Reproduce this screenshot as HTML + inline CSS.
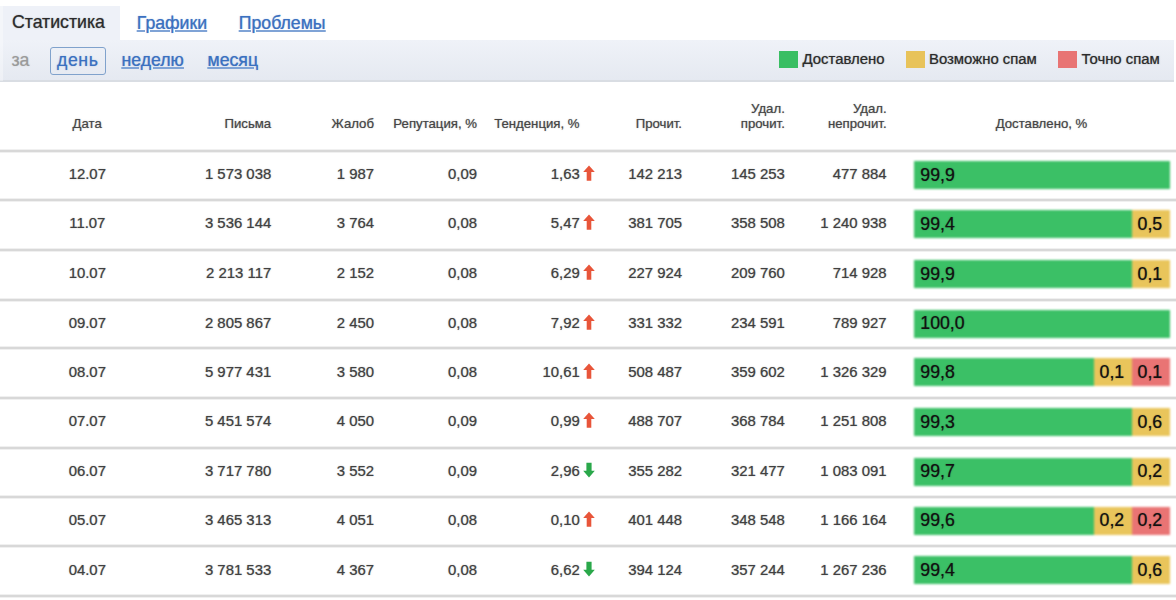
<!DOCTYPE html>
<html><head><meta charset="utf-8"><style>
html,body{margin:0;padding:0;background:#fff;width:1176px;height:600px;overflow:hidden;position:relative;font-family:"Liberation Sans",sans-serif;}
.t{position:absolute;white-space:pre;-webkit-text-stroke:0.1px currentColor;}
#w{position:absolute;left:0;top:0;width:1176px;height:600px;}
.bl{filter:blur(0.8px);}
.ln{position:absolute;left:0;width:1176px;height:2px;background:#d8d8d8;box-shadow:0 1px 0 #f0f0f0,0 -1px 0 #f0f0f0;}
.bar{position:absolute;}
.seg{position:absolute;top:0;height:100%;}
a{color:inherit;text-decoration:none;}
</style></head><body><div id="w">

<div style="position:absolute;left:0;top:6px;width:120px;height:34px;background:#eef1f8;"></div>
<div style="position:absolute;left:0;top:39.5px;width:1174px;height:40px;background:linear-gradient(#eff2f8,#e5e9f1);border-bottom:2px solid #d9dde3;"></div>
<div style="position:absolute;left:0;top:6px;width:3px;height:75px;background:rgba(255,255,255,.35);"></div>
<div class="t" style="left:12.00px;top:12.05px;font-size:17.7px;line-height:21.24px;color:#2b2b2b;text-shadow:0 0 1.2px rgba(43,43,43,0.5);">Статистика</div>
<div class="t" style="left:136.80px;top:12.65px;font-size:17.7px;line-height:21.24px;color:#3a70c0;text-shadow:0 0 1.2px rgba(58,112,192,0.5);text-decoration:underline;text-decoration-color:#7fa3d6;text-decoration-thickness:1.5px;text-underline-offset:0.5px;">Графики</div>
<div class="t" style="left:238.80px;top:12.65px;font-size:17.7px;line-height:21.24px;color:#3a70c0;text-shadow:0 0 1.2px rgba(58,112,192,0.5);text-decoration:underline;text-decoration-color:#7fa3d6;text-decoration-thickness:1.5px;text-underline-offset:0.5px;">Проблемы</div>
<div class="t" style="left:11.50px;top:50.35px;font-size:17.7px;line-height:21.24px;color:#9a9a9a;text-shadow:0 0 1.2px rgba(154,154,154,0.5);">за</div>
<div style="position:absolute;left:50px;top:46.5px;width:53.5px;height:26.5px;border:1.4px solid #80a2cc;border-radius:3px;"></div>
<div class="t" style="left:57.00px;top:50.35px;font-size:17.7px;line-height:21.24px;color:#3a70c0;text-shadow:0 0 1.2px rgba(58,112,192,0.5);letter-spacing:0.6px;">день</div>
<div class="t" style="left:121.50px;top:50.35px;font-size:17.7px;line-height:21.24px;color:#3a70c0;text-shadow:0 0 1.2px rgba(58,112,192,0.5);text-decoration:underline;text-decoration-color:#7fa3d6;text-decoration-thickness:1.5px;text-underline-offset:0.5px;">неделю</div>
<div class="t" style="left:207.50px;top:50.35px;font-size:17.7px;line-height:21.24px;color:#3a70c0;text-shadow:0 0 1.2px rgba(58,112,192,0.5);text-decoration:underline;text-decoration-color:#7fa3d6;text-decoration-thickness:1.5px;text-underline-offset:0.5px;">месяц</div>
<div style="position:absolute;left:779px;top:51px;width:19px;height:17px;background:#39be63;"></div>
<div class="t" style="left:802.50px;top:50.90px;font-size:14.9px;line-height:17.88px;color:#2b2b2b;text-shadow:0 0 1.2px rgba(43,43,43,0.5);">Доставлено</div>
<div style="position:absolute;left:905.5px;top:51px;width:19px;height:17px;background:#e8c35a;"></div>
<div class="t" style="left:929.00px;top:50.90px;font-size:14.9px;line-height:17.88px;color:#2b2b2b;text-shadow:0 0 1.2px rgba(43,43,43,0.5);">Возможно спам</div>
<div style="position:absolute;left:1058px;top:51px;width:19px;height:17px;background:#e87474;"></div>
<div class="t" style="left:1081.50px;top:50.90px;font-size:14.9px;line-height:17.88px;color:#2b2b2b;text-shadow:0 0 1.2px rgba(43,43,43,0.5);">Точно спам</div>
<div class="t" style="left:-112.80px;width:400px;text-align:center;top:115.71px;font-size:13.2px;line-height:15.84px;color:#454545;text-shadow:0 0 1.2px rgba(69,69,69,0.5);">Дата</div>
<div class="t" style="right:904.80px;top:115.71px;font-size:13.2px;line-height:15.84px;color:#454545;text-shadow:0 0 1.2px rgba(69,69,69,0.5);">Письма</div>
<div class="t" style="right:802.00px;top:115.71px;font-size:13.2px;line-height:15.84px;color:#454545;text-shadow:0 0 1.2px rgba(69,69,69,0.5);">Жалоб</div>
<div class="t" style="right:699.00px;top:115.71px;font-size:13.2px;line-height:15.84px;color:#454545;text-shadow:0 0 1.2px rgba(69,69,69,0.5);">Репутация, %</div>
<div class="t" style="right:596.50px;top:115.71px;font-size:13.2px;line-height:15.84px;color:#454545;text-shadow:0 0 1.2px rgba(69,69,69,0.5);">Тенденция, %</div>
<div class="t" style="right:494.00px;top:115.71px;font-size:13.2px;line-height:15.84px;color:#454545;text-shadow:0 0 1.2px rgba(69,69,69,0.5);">Прочит.</div>
<div class="t" style="right:391.20px;top:101.11px;font-size:13.2px;line-height:15.84px;color:#454545;text-shadow:0 0 1.2px rgba(69,69,69,0.5);">Удал.</div>
<div class="t" style="right:391.20px;top:115.71px;font-size:13.2px;line-height:15.84px;color:#454545;text-shadow:0 0 1.2px rgba(69,69,69,0.5);">прочит.</div>
<div class="t" style="right:289.40px;top:101.11px;font-size:13.2px;line-height:15.84px;color:#454545;text-shadow:0 0 1.2px rgba(69,69,69,0.5);">Удал.</div>
<div class="t" style="right:289.40px;top:115.71px;font-size:13.2px;line-height:15.84px;color:#454545;text-shadow:0 0 1.2px rgba(69,69,69,0.5);">непрочит.</div>
<div class="t" style="left:841.50px;width:400px;text-align:center;top:115.71px;font-size:13.2px;line-height:15.84px;color:#454545;text-shadow:0 0 1.2px rgba(69,69,69,0.5);">Доставлено, %</div>
<div class="ln" style="top:150px"></div>
<div class="ln" style="top:199px"></div>
<div class="ln" style="top:249px"></div>
<div class="ln" style="top:299px"></div>
<div class="ln" style="top:347px"></div>
<div class="ln" style="top:397px"></div>
<div class="ln" style="top:447px"></div>
<div class="ln" style="top:496px"></div>
<div class="ln" style="top:545px"></div>
<div class="ln" style="top:595px"></div>
<div class="t" style="left:-112.70px;width:400px;text-align:center;top:166.27px;font-size:14.9px;line-height:17.88px;color:#404040;text-shadow:0 0 1.2px rgba(64,64,64,0.5);">12.07</div>
<div class="t" style="right:904.80px;top:166.27px;font-size:14.9px;line-height:17.88px;color:#404040;text-shadow:0 0 1.2px rgba(64,64,64,0.5);">1 573 038</div>
<div class="t" style="right:802.00px;top:166.27px;font-size:14.9px;line-height:17.88px;color:#404040;text-shadow:0 0 1.2px rgba(64,64,64,0.5);">1 987</div>
<div class="t" style="right:699.00px;top:166.27px;font-size:14.9px;line-height:17.88px;color:#404040;text-shadow:0 0 1.2px rgba(64,64,64,0.5);">0,09</div>
<div class="t" style="right:596.30px;top:166.27px;font-size:14.9px;line-height:17.88px;color:#404040;text-shadow:0 0 1.2px rgba(64,64,64,0.5);">1,63</div>
<svg style="position:absolute;left:583px;top:165.37px" width="12" height="16" viewBox="0 0 12 16"><path d="M6 0.5 L11.8 7 L8.3 7 L8.3 15.8 L3.7 15.8 L3.7 7 L0.2 7 Z" fill="#e8553a"/></svg>
<div class="t" style="right:494.00px;top:166.27px;font-size:14.9px;line-height:17.88px;color:#404040;text-shadow:0 0 1.2px rgba(64,64,64,0.5);">142 213</div>
<div class="t" style="right:391.20px;top:166.27px;font-size:14.9px;line-height:17.88px;color:#404040;text-shadow:0 0 1.2px rgba(64,64,64,0.5);">145 253</div>
<div class="t" style="right:289.40px;top:166.27px;font-size:14.9px;line-height:17.88px;color:#404040;text-shadow:0 0 1.2px rgba(64,64,64,0.5);">477 884</div>
<div class="bl" style="position:absolute;left:914px;top:161.07px;width:256px;height:28px;background:#3bc066"></div>
<div class="t" style="left:920.30px;top:164.82px;font-size:17.7px;line-height:21.24px;color:#111;text-shadow:0 0 1.2px rgba(17,17,17,0.5);text-shadow:0 0 1.2px rgba(17,17,17,.55);">99,9</div>
<div class="t" style="left:-112.70px;width:400px;text-align:center;top:215.30px;font-size:14.9px;line-height:17.88px;color:#404040;text-shadow:0 0 1.2px rgba(64,64,64,0.5);">11.07</div>
<div class="t" style="right:904.80px;top:215.30px;font-size:14.9px;line-height:17.88px;color:#404040;text-shadow:0 0 1.2px rgba(64,64,64,0.5);">3 536 144</div>
<div class="t" style="right:802.00px;top:215.30px;font-size:14.9px;line-height:17.88px;color:#404040;text-shadow:0 0 1.2px rgba(64,64,64,0.5);">3 764</div>
<div class="t" style="right:699.00px;top:215.30px;font-size:14.9px;line-height:17.88px;color:#404040;text-shadow:0 0 1.2px rgba(64,64,64,0.5);">0,08</div>
<div class="t" style="right:596.30px;top:215.30px;font-size:14.9px;line-height:17.88px;color:#404040;text-shadow:0 0 1.2px rgba(64,64,64,0.5);">5,47</div>
<svg style="position:absolute;left:583px;top:214.40px" width="12" height="16" viewBox="0 0 12 16"><path d="M6 0.5 L11.8 7 L8.3 7 L8.3 15.8 L3.7 15.8 L3.7 7 L0.2 7 Z" fill="#e8553a"/></svg>
<div class="t" style="right:494.00px;top:215.30px;font-size:14.9px;line-height:17.88px;color:#404040;text-shadow:0 0 1.2px rgba(64,64,64,0.5);">381 705</div>
<div class="t" style="right:391.20px;top:215.30px;font-size:14.9px;line-height:17.88px;color:#404040;text-shadow:0 0 1.2px rgba(64,64,64,0.5);">358 508</div>
<div class="t" style="right:289.40px;top:215.30px;font-size:14.9px;line-height:17.88px;color:#404040;text-shadow:0 0 1.2px rgba(64,64,64,0.5);">1 240 938</div>
<div class="bl" style="position:absolute;left:914px;top:210.10px;width:256px;height:28px;background:#3bc066"><div style="position:absolute;left:218.00px;top:0;width:38.00px;height:100%;background:#e9c55b"></div></div>
<div class="t" style="left:920.30px;top:213.85px;font-size:17.7px;line-height:21.24px;color:#111;text-shadow:0 0 1.2px rgba(17,17,17,0.5);text-shadow:0 0 1.2px rgba(17,17,17,.55);">99,4</div>
<div class="t" style="left:1137.60px;top:213.85px;font-size:17.7px;line-height:21.24px;color:#111;text-shadow:0 0 1.2px rgba(17,17,17,0.5);text-shadow:0 0 1.2px rgba(17,17,17,.55);">0,5</div>
<div class="t" style="left:-112.70px;width:400px;text-align:center;top:265.10px;font-size:14.9px;line-height:17.88px;color:#404040;text-shadow:0 0 1.2px rgba(64,64,64,0.5);">10.07</div>
<div class="t" style="right:904.80px;top:265.10px;font-size:14.9px;line-height:17.88px;color:#404040;text-shadow:0 0 1.2px rgba(64,64,64,0.5);">2 213 117</div>
<div class="t" style="right:802.00px;top:265.10px;font-size:14.9px;line-height:17.88px;color:#404040;text-shadow:0 0 1.2px rgba(64,64,64,0.5);">2 152</div>
<div class="t" style="right:699.00px;top:265.10px;font-size:14.9px;line-height:17.88px;color:#404040;text-shadow:0 0 1.2px rgba(64,64,64,0.5);">0,08</div>
<div class="t" style="right:596.30px;top:265.10px;font-size:14.9px;line-height:17.88px;color:#404040;text-shadow:0 0 1.2px rgba(64,64,64,0.5);">6,29</div>
<svg style="position:absolute;left:583px;top:264.20px" width="12" height="16" viewBox="0 0 12 16"><path d="M6 0.5 L11.8 7 L8.3 7 L8.3 15.8 L3.7 15.8 L3.7 7 L0.2 7 Z" fill="#e8553a"/></svg>
<div class="t" style="right:494.00px;top:265.10px;font-size:14.9px;line-height:17.88px;color:#404040;text-shadow:0 0 1.2px rgba(64,64,64,0.5);">227 924</div>
<div class="t" style="right:391.20px;top:265.10px;font-size:14.9px;line-height:17.88px;color:#404040;text-shadow:0 0 1.2px rgba(64,64,64,0.5);">209 760</div>
<div class="t" style="right:289.40px;top:265.10px;font-size:14.9px;line-height:17.88px;color:#404040;text-shadow:0 0 1.2px rgba(64,64,64,0.5);">714 928</div>
<div class="bl" style="position:absolute;left:914px;top:259.90px;width:256px;height:28px;background:#3bc066"><div style="position:absolute;left:218.00px;top:0;width:38.00px;height:100%;background:#e9c55b"></div></div>
<div class="t" style="left:920.30px;top:263.65px;font-size:17.7px;line-height:21.24px;color:#111;text-shadow:0 0 1.2px rgba(17,17,17,0.5);text-shadow:0 0 1.2px rgba(17,17,17,.55);">99,9</div>
<div class="t" style="left:1137.60px;top:263.65px;font-size:17.7px;line-height:21.24px;color:#111;text-shadow:0 0 1.2px rgba(17,17,17,0.5);text-shadow:0 0 1.2px rgba(17,17,17,.55);">0,1</div>
<div class="t" style="left:-112.70px;width:400px;text-align:center;top:314.70px;font-size:14.9px;line-height:17.88px;color:#404040;text-shadow:0 0 1.2px rgba(64,64,64,0.5);">09.07</div>
<div class="t" style="right:904.80px;top:314.70px;font-size:14.9px;line-height:17.88px;color:#404040;text-shadow:0 0 1.2px rgba(64,64,64,0.5);">2 805 867</div>
<div class="t" style="right:802.00px;top:314.70px;font-size:14.9px;line-height:17.88px;color:#404040;text-shadow:0 0 1.2px rgba(64,64,64,0.5);">2 450</div>
<div class="t" style="right:699.00px;top:314.70px;font-size:14.9px;line-height:17.88px;color:#404040;text-shadow:0 0 1.2px rgba(64,64,64,0.5);">0,08</div>
<div class="t" style="right:596.30px;top:314.70px;font-size:14.9px;line-height:17.88px;color:#404040;text-shadow:0 0 1.2px rgba(64,64,64,0.5);">7,92</div>
<svg style="position:absolute;left:583px;top:313.80px" width="12" height="16" viewBox="0 0 12 16"><path d="M6 0.5 L11.8 7 L8.3 7 L8.3 15.8 L3.7 15.8 L3.7 7 L0.2 7 Z" fill="#e8553a"/></svg>
<div class="t" style="right:494.00px;top:314.70px;font-size:14.9px;line-height:17.88px;color:#404040;text-shadow:0 0 1.2px rgba(64,64,64,0.5);">331 332</div>
<div class="t" style="right:391.20px;top:314.70px;font-size:14.9px;line-height:17.88px;color:#404040;text-shadow:0 0 1.2px rgba(64,64,64,0.5);">234 591</div>
<div class="t" style="right:289.40px;top:314.70px;font-size:14.9px;line-height:17.88px;color:#404040;text-shadow:0 0 1.2px rgba(64,64,64,0.5);">789 927</div>
<div class="bl" style="position:absolute;left:914px;top:309.50px;width:256px;height:28px;background:#3bc066"></div>
<div class="t" style="left:920.30px;top:313.25px;font-size:17.7px;line-height:21.24px;color:#111;text-shadow:0 0 1.2px rgba(17,17,17,0.5);text-shadow:0 0 1.2px rgba(17,17,17,.55);">100,0</div>
<div class="t" style="left:-112.70px;width:400px;text-align:center;top:363.60px;font-size:14.9px;line-height:17.88px;color:#404040;text-shadow:0 0 1.2px rgba(64,64,64,0.5);">08.07</div>
<div class="t" style="right:904.80px;top:363.60px;font-size:14.9px;line-height:17.88px;color:#404040;text-shadow:0 0 1.2px rgba(64,64,64,0.5);">5 977 431</div>
<div class="t" style="right:802.00px;top:363.60px;font-size:14.9px;line-height:17.88px;color:#404040;text-shadow:0 0 1.2px rgba(64,64,64,0.5);">3 580</div>
<div class="t" style="right:699.00px;top:363.60px;font-size:14.9px;line-height:17.88px;color:#404040;text-shadow:0 0 1.2px rgba(64,64,64,0.5);">0,08</div>
<div class="t" style="right:596.30px;top:363.60px;font-size:14.9px;line-height:17.88px;color:#404040;text-shadow:0 0 1.2px rgba(64,64,64,0.5);">10,61</div>
<svg style="position:absolute;left:583px;top:362.70px" width="12" height="16" viewBox="0 0 12 16"><path d="M6 0.5 L11.8 7 L8.3 7 L8.3 15.8 L3.7 15.8 L3.7 7 L0.2 7 Z" fill="#e8553a"/></svg>
<div class="t" style="right:494.00px;top:363.60px;font-size:14.9px;line-height:17.88px;color:#404040;text-shadow:0 0 1.2px rgba(64,64,64,0.5);">508 487</div>
<div class="t" style="right:391.20px;top:363.60px;font-size:14.9px;line-height:17.88px;color:#404040;text-shadow:0 0 1.2px rgba(64,64,64,0.5);">359 602</div>
<div class="t" style="right:289.40px;top:363.60px;font-size:14.9px;line-height:17.88px;color:#404040;text-shadow:0 0 1.2px rgba(64,64,64,0.5);">1 326 329</div>
<div class="bl" style="position:absolute;left:914px;top:358.40px;width:256px;height:28px;background:#3bc066"><div style="position:absolute;left:180.00px;top:0;width:38.00px;height:100%;background:#e9c55b"></div><div style="position:absolute;left:218.00px;top:0;width:38.00px;height:100%;background:#e97474"></div></div>
<div class="t" style="left:920.30px;top:362.15px;font-size:17.7px;line-height:21.24px;color:#111;text-shadow:0 0 1.2px rgba(17,17,17,0.5);text-shadow:0 0 1.2px rgba(17,17,17,.55);">99,8</div>
<div class="t" style="left:1099.60px;top:362.15px;font-size:17.7px;line-height:21.24px;color:#111;text-shadow:0 0 1.2px rgba(17,17,17,0.5);text-shadow:0 0 1.2px rgba(17,17,17,.55);">0,1</div>
<div class="t" style="left:1137.60px;top:362.15px;font-size:17.7px;line-height:21.24px;color:#111;text-shadow:0 0 1.2px rgba(17,17,17,0.5);text-shadow:0 0 1.2px rgba(17,17,17,.55);">0,1</div>
<div class="t" style="left:-112.70px;width:400px;text-align:center;top:413.20px;font-size:14.9px;line-height:17.88px;color:#404040;text-shadow:0 0 1.2px rgba(64,64,64,0.5);">07.07</div>
<div class="t" style="right:904.80px;top:413.20px;font-size:14.9px;line-height:17.88px;color:#404040;text-shadow:0 0 1.2px rgba(64,64,64,0.5);">5 451 574</div>
<div class="t" style="right:802.00px;top:413.20px;font-size:14.9px;line-height:17.88px;color:#404040;text-shadow:0 0 1.2px rgba(64,64,64,0.5);">4 050</div>
<div class="t" style="right:699.00px;top:413.20px;font-size:14.9px;line-height:17.88px;color:#404040;text-shadow:0 0 1.2px rgba(64,64,64,0.5);">0,09</div>
<div class="t" style="right:596.30px;top:413.20px;font-size:14.9px;line-height:17.88px;color:#404040;text-shadow:0 0 1.2px rgba(64,64,64,0.5);">0,99</div>
<svg style="position:absolute;left:583px;top:412.30px" width="12" height="16" viewBox="0 0 12 16"><path d="M6 0.5 L11.8 7 L8.3 7 L8.3 15.8 L3.7 15.8 L3.7 7 L0.2 7 Z" fill="#e8553a"/></svg>
<div class="t" style="right:494.00px;top:413.20px;font-size:14.9px;line-height:17.88px;color:#404040;text-shadow:0 0 1.2px rgba(64,64,64,0.5);">488 707</div>
<div class="t" style="right:391.20px;top:413.20px;font-size:14.9px;line-height:17.88px;color:#404040;text-shadow:0 0 1.2px rgba(64,64,64,0.5);">368 784</div>
<div class="t" style="right:289.40px;top:413.20px;font-size:14.9px;line-height:17.88px;color:#404040;text-shadow:0 0 1.2px rgba(64,64,64,0.5);">1 251 808</div>
<div class="bl" style="position:absolute;left:914px;top:408.00px;width:256px;height:28px;background:#3bc066"><div style="position:absolute;left:218.00px;top:0;width:38.00px;height:100%;background:#e9c55b"></div></div>
<div class="t" style="left:920.30px;top:411.75px;font-size:17.7px;line-height:21.24px;color:#111;text-shadow:0 0 1.2px rgba(17,17,17,0.5);text-shadow:0 0 1.2px rgba(17,17,17,.55);">99,3</div>
<div class="t" style="left:1137.60px;top:411.75px;font-size:17.7px;line-height:21.24px;color:#111;text-shadow:0 0 1.2px rgba(17,17,17,0.5);text-shadow:0 0 1.2px rgba(17,17,17,.55);">0,6</div>
<div class="t" style="left:-112.70px;width:400px;text-align:center;top:462.90px;font-size:14.9px;line-height:17.88px;color:#404040;text-shadow:0 0 1.2px rgba(64,64,64,0.5);">06.07</div>
<div class="t" style="right:904.80px;top:462.90px;font-size:14.9px;line-height:17.88px;color:#404040;text-shadow:0 0 1.2px rgba(64,64,64,0.5);">3 717 780</div>
<div class="t" style="right:802.00px;top:462.90px;font-size:14.9px;line-height:17.88px;color:#404040;text-shadow:0 0 1.2px rgba(64,64,64,0.5);">3 552</div>
<div class="t" style="right:699.00px;top:462.90px;font-size:14.9px;line-height:17.88px;color:#404040;text-shadow:0 0 1.2px rgba(64,64,64,0.5);">0,09</div>
<div class="t" style="right:596.30px;top:462.90px;font-size:14.9px;line-height:17.88px;color:#404040;text-shadow:0 0 1.2px rgba(64,64,64,0.5);">2,96</div>
<svg style="position:absolute;left:583px;top:462.00px" width="12" height="16" viewBox="0 0 12 16"><path d="M3.4 0.8 L8.6 0.8 L8.6 8.8 L11.8 8.8 L6 15.6 L0.2 8.8 L3.4 8.8 Z" fill="#2aa84a"/></svg>
<div class="t" style="right:494.00px;top:462.90px;font-size:14.9px;line-height:17.88px;color:#404040;text-shadow:0 0 1.2px rgba(64,64,64,0.5);">355 282</div>
<div class="t" style="right:391.20px;top:462.90px;font-size:14.9px;line-height:17.88px;color:#404040;text-shadow:0 0 1.2px rgba(64,64,64,0.5);">321 477</div>
<div class="t" style="right:289.40px;top:462.90px;font-size:14.9px;line-height:17.88px;color:#404040;text-shadow:0 0 1.2px rgba(64,64,64,0.5);">1 083 091</div>
<div class="bl" style="position:absolute;left:914px;top:457.70px;width:256px;height:28px;background:#3bc066"><div style="position:absolute;left:218.00px;top:0;width:38.00px;height:100%;background:#e9c55b"></div></div>
<div class="t" style="left:920.30px;top:461.45px;font-size:17.7px;line-height:21.24px;color:#111;text-shadow:0 0 1.2px rgba(17,17,17,0.5);text-shadow:0 0 1.2px rgba(17,17,17,.55);">99,7</div>
<div class="t" style="left:1137.60px;top:461.45px;font-size:17.7px;line-height:21.24px;color:#111;text-shadow:0 0 1.2px rgba(17,17,17,0.5);text-shadow:0 0 1.2px rgba(17,17,17,.55);">0,2</div>
<div class="t" style="left:-112.70px;width:400px;text-align:center;top:511.70px;font-size:14.9px;line-height:17.88px;color:#404040;text-shadow:0 0 1.2px rgba(64,64,64,0.5);">05.07</div>
<div class="t" style="right:904.80px;top:511.70px;font-size:14.9px;line-height:17.88px;color:#404040;text-shadow:0 0 1.2px rgba(64,64,64,0.5);">3 465 313</div>
<div class="t" style="right:802.00px;top:511.70px;font-size:14.9px;line-height:17.88px;color:#404040;text-shadow:0 0 1.2px rgba(64,64,64,0.5);">4 051</div>
<div class="t" style="right:699.00px;top:511.70px;font-size:14.9px;line-height:17.88px;color:#404040;text-shadow:0 0 1.2px rgba(64,64,64,0.5);">0,08</div>
<div class="t" style="right:596.30px;top:511.70px;font-size:14.9px;line-height:17.88px;color:#404040;text-shadow:0 0 1.2px rgba(64,64,64,0.5);">0,10</div>
<svg style="position:absolute;left:583px;top:510.80px" width="12" height="16" viewBox="0 0 12 16"><path d="M6 0.5 L11.8 7 L8.3 7 L8.3 15.8 L3.7 15.8 L3.7 7 L0.2 7 Z" fill="#e8553a"/></svg>
<div class="t" style="right:494.00px;top:511.70px;font-size:14.9px;line-height:17.88px;color:#404040;text-shadow:0 0 1.2px rgba(64,64,64,0.5);">401 448</div>
<div class="t" style="right:391.20px;top:511.70px;font-size:14.9px;line-height:17.88px;color:#404040;text-shadow:0 0 1.2px rgba(64,64,64,0.5);">348 548</div>
<div class="t" style="right:289.40px;top:511.70px;font-size:14.9px;line-height:17.88px;color:#404040;text-shadow:0 0 1.2px rgba(64,64,64,0.5);">1 166 164</div>
<div class="bl" style="position:absolute;left:914px;top:506.50px;width:256px;height:28px;background:#3bc066"><div style="position:absolute;left:180.00px;top:0;width:38.00px;height:100%;background:#e9c55b"></div><div style="position:absolute;left:218.00px;top:0;width:38.00px;height:100%;background:#e97474"></div></div>
<div class="t" style="left:920.30px;top:510.25px;font-size:17.7px;line-height:21.24px;color:#111;text-shadow:0 0 1.2px rgba(17,17,17,0.5);text-shadow:0 0 1.2px rgba(17,17,17,.55);">99,6</div>
<div class="t" style="left:1099.60px;top:510.25px;font-size:17.7px;line-height:21.24px;color:#111;text-shadow:0 0 1.2px rgba(17,17,17,0.5);text-shadow:0 0 1.2px rgba(17,17,17,.55);">0,2</div>
<div class="t" style="left:1137.60px;top:510.25px;font-size:17.7px;line-height:21.24px;color:#111;text-shadow:0 0 1.2px rgba(17,17,17,0.5);text-shadow:0 0 1.2px rgba(17,17,17,.55);">0,2</div>
<div class="t" style="left:-112.70px;width:400px;text-align:center;top:561.60px;font-size:14.9px;line-height:17.88px;color:#404040;text-shadow:0 0 1.2px rgba(64,64,64,0.5);">04.07</div>
<div class="t" style="right:904.80px;top:561.60px;font-size:14.9px;line-height:17.88px;color:#404040;text-shadow:0 0 1.2px rgba(64,64,64,0.5);">3 781 533</div>
<div class="t" style="right:802.00px;top:561.60px;font-size:14.9px;line-height:17.88px;color:#404040;text-shadow:0 0 1.2px rgba(64,64,64,0.5);">4 367</div>
<div class="t" style="right:699.00px;top:561.60px;font-size:14.9px;line-height:17.88px;color:#404040;text-shadow:0 0 1.2px rgba(64,64,64,0.5);">0,08</div>
<div class="t" style="right:596.30px;top:561.60px;font-size:14.9px;line-height:17.88px;color:#404040;text-shadow:0 0 1.2px rgba(64,64,64,0.5);">6,62</div>
<svg style="position:absolute;left:583px;top:560.70px" width="12" height="16" viewBox="0 0 12 16"><path d="M3.4 0.8 L8.6 0.8 L8.6 8.8 L11.8 8.8 L6 15.6 L0.2 8.8 L3.4 8.8 Z" fill="#2aa84a"/></svg>
<div class="t" style="right:494.00px;top:561.60px;font-size:14.9px;line-height:17.88px;color:#404040;text-shadow:0 0 1.2px rgba(64,64,64,0.5);">394 124</div>
<div class="t" style="right:391.20px;top:561.60px;font-size:14.9px;line-height:17.88px;color:#404040;text-shadow:0 0 1.2px rgba(64,64,64,0.5);">357 244</div>
<div class="t" style="right:289.40px;top:561.60px;font-size:14.9px;line-height:17.88px;color:#404040;text-shadow:0 0 1.2px rgba(64,64,64,0.5);">1 267 236</div>
<div class="bl" style="position:absolute;left:914px;top:556.40px;width:256px;height:28px;background:#3bc066"><div style="position:absolute;left:218.00px;top:0;width:38.00px;height:100%;background:#e9c55b"></div></div>
<div class="t" style="left:920.30px;top:560.15px;font-size:17.7px;line-height:21.24px;color:#111;text-shadow:0 0 1.2px rgba(17,17,17,0.5);text-shadow:0 0 1.2px rgba(17,17,17,.55);">99,4</div>
<div class="t" style="left:1137.60px;top:560.15px;font-size:17.7px;line-height:21.24px;color:#111;text-shadow:0 0 1.2px rgba(17,17,17,0.5);text-shadow:0 0 1.2px rgba(17,17,17,.55);">0,6</div>
</div></body></html>
